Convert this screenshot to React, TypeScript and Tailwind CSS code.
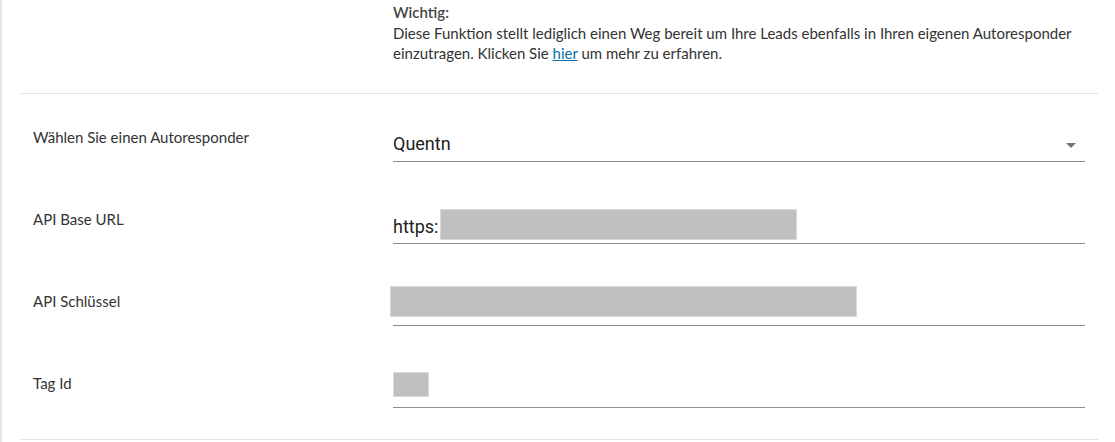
const labelFont = { fontFamily: '"Segoe UI", Lato, "Liberation Sans", sans-serif' };
const inputFont = { fontFamily: "Roboto, sans-serif" };

const Row = ({ label, children }: { label: string; children: React.ReactNode }) => (
  <div className="flex h-[82px] items-start">
    <div className="w-[360px] shrink-0 pt-[32px] text-[15px] leading-[20px] text-[#333]">{label}</div>
    <div className="w-[692px] pt-[21px]">{children}</div>
  </div>
);

const Redacted = ({ className }: { className: string }) => (
  <span className={"inline-block border border-[#d9d9d9] bg-[#c0c0c0] " + className} />
);

export default function App() {
  return (
    <div className="h-[442px] w-[1115px] border-l-2 border-[#e6e6e6] bg-white" style={labelFont}>
      <div className="mx-[18px] w-[1078px]">
        <div className="flex border-b border-[#e3e3e3] pb-[29px] pl-[13px] pt-[2px]">
          <div className="w-[360px] shrink-0" />
          <div className="text-[15px] leading-[20.5px] text-[#333]">
            <div className="font-semibold text-[#444]">Wichtig:</div>
            <div>
              Diese Funktion stellt lediglich einen Weg bereit um Ihre Leads ebenfalls in Ihren eigenen Autoresponder
              <br />
              einzutragen. Klicken Sie{" "}
              <a href="#" className="text-[#0b6fa8] underline">
                hier
              </a>{" "}
              um mehr zu erfahren.
            </div>
          </div>
        </div>

        <div className="border-b border-[#e3e3e3] pb-[16px] pl-[13px] pt-[1px]">
          <Row label="Wählen Sie einen Autoresponder">
            <div className="flex h-[46px] items-end justify-between border-b border-[#8c8c8c] pb-[5px]" style={inputFont}>
              <span className="text-[18px] leading-[24px] text-[#222]">Quentn</span>
              <svg width="10" height="5" viewBox="0 0 10 5" className="mb-[8px] mr-[9px]">
                <path d="M0 0h10L5 5z" fill="#757575" />
              </svg>
            </div>
          </Row>
          <Row label="API Base URL">
            <div className="flex h-[46px] items-end border-b border-[#8c8c8c] pb-[3px]" style={inputFont}>
              <span className="pb-[1px] text-[18px] leading-[24px] text-[#222]">https:</span>
              <Redacted className="ml-[2px] h-[31px] w-[357px]" />
            </div>
          </Row>
          <Row label="API Schlüssel">
            <div className="relative h-[46px] border-b border-[#8c8c8c]">
              <Redacted className="absolute left-[-3px] top-[6px] h-[31px] w-[467px]" />
            </div>
          </Row>
          <Row label="Tag Id">
            <div className="flex h-[46px] items-end border-b border-[#8c8c8c] pb-[10px]">
              <Redacted className="h-[25px] w-[36px]" />
            </div>
          </Row>
        </div>
      </div>
    </div>
  );
}
